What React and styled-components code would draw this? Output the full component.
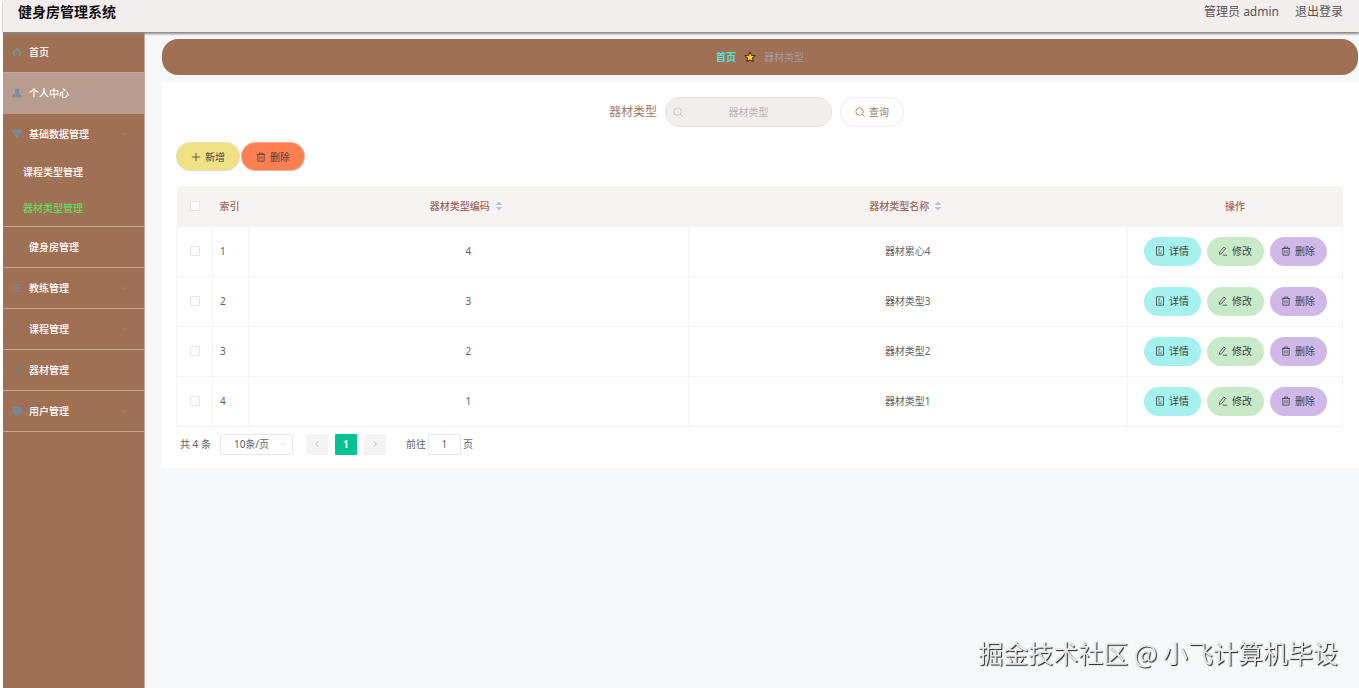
import React from 'react';
import styled, { createGlobalStyle } from 'styled-components';

const menus = [
  { name: '首页', icon: 'home' },
  { name: '个人中心', icon: 'user', active: true },
  {
    name: '基础数据管理',
    icon: 'funnel',
    arrow: true,
    children: [{ name: '课程类型管理' }, { name: '器材类型管理', current: true }],
  },
  { name: '健身房管理', icon: 'card' },
  { name: '教练管理', icon: 'list', arrow: true },
  { name: '课程管理', icon: 'copy', arrow: true },
  { name: '器材管理', icon: 'plane' },
  { name: '用户管理', icon: 'screen', arrow: true },
];

const rows = [
  { id: 1, code: '4', name: '器材累心4' },
  { id: 2, code: '3', name: '器材类型3' },
  { id: 3, code: '2', name: '器材类型2' },
  { id: 4, code: '1', name: '器材类型1' },
];

const menuIcons = {
  home: (
    <g fill="none" stroke="#6f9c98" strokeWidth="2">
      <path d="M.8 7.5 6 2l5.2 5.500" />
      <path d="M3 7v4.500M9 7v4.500" />
    </g>
  ),
  user: (
    <g fill="#7f8c9a">
      <path d="M3.500 1h5v5.500h-5z" />
      <path d="M3.500 6.500h5L11.500 9v2.500H.5V9z" />
    </g>
  ),
  funnel: (
    <g fill="#768e98">
      <path d="M.5 1h11v3.500L9.500 6h-7L.5 4.500z" />
      <path d="M2.800 7h6.400L6 11.800z" />
    </g>
  ),
  card: <path d="M1 3h3V2h7v7.500H9V11H1z" fill="none" stroke="#8d7765" />,
  list: <path d="M1 2.200h10M1 6h10M1 9.800h10" stroke="#80807c" strokeWidth="2.200" />,
  copy: (
    <path d="M4 9.500H2.500L1 11V5l2-3.500h6l2 2v4L9 10.500H6" fill="none" stroke="#857a66" strokeWidth="1.200" />
  ),
  plane: <path d="M.5 5 11.500 1 8 11.500 5.800 6.600z" fill="#7d7b6c" />,
  screen: (
    <g fill="#75879a">
      <path d="M.5 1h11v8H.5z" />
      <path d="M3 9h7v2.500H3z" />
    </g>
  ),
};

const lineIcons = {
  search: (
    <>
      <circle cx="5.500" cy="5.500" r="4.500" />
      <path d="m8.800 8.800 2.700 2.700" />
    </>
  ),
  plus: <path d="M6 1v10M1 6h10" />,
  trash: <path d="M1 3h10M4 3V1.300h4V3M2.200 3v8h7.600V3M4.700 5.200v3.600M7.300 5.200v3.600" />,
  doc: <path d="M1.800 1h8.400v10H1.800zM4 3.800h2M4 6h1.500M4 8.500h4M7 6h1" />,
  edit: <path d="M2 7.500 7 1.200l2.200 1.700L4.300 9.200 1.700 10zM5.500 11H11" />,
  down: <path d="m2 4.500 4 3.500 4-3.500" />,
  left: <path d="M7.500 2.500 4.500 6l3 3.500" />,
  right: <path d="M4.500 2.500 7.500 6l-3 3.500" />,
};

const Icon = ({ name, size = 10 }) => (
  <LineSvg viewBox="0 0 12 12" width={size} height={size} aria-hidden="true">
    {lineIcons[name]}
  </LineSvg>
);

const SortIcon = () => (
  <svg viewBox="0 0 8 10" width="8" height="10" aria-hidden="true">
    <path d="M4 .5 7.500 4h-7zM4 9.500.5 6h7z" fill="#c0c4cc" />
  </svg>
);

const App = () => {
  const [checked, setChecked] = React.useState([]);

  const toggle = (id) => {
    setChecked(checked.includes(id) ? checked.filter((c) => c !== id) : [...checked, id]);
  };

  const toggleAll = () => {
    setChecked(checked.length === rows.length ? [] : rows.map((row) => row.id));
  };

  return (
    <>
      <GlobalStyle />
      <Page>
        <Header>
          <Title>健身房管理系统</Title>
          <Account>
            <span>管理员 admin</span>
            <LogoutButton type="button">退出登录</LogoutButton>
          </Account>
        </Header>
        <Body>
          <Sidebar>
            {menus.map((menu) => (
              <MenuGroup key={menu.name} $plain={!!menu.active}>
                <MenuLink href="#" $active={menu.active}>
                  <MenuSvg viewBox="0 0 12 12" width="10" height="10" aria-hidden="true">
                    {menuIcons[menu.icon]}
                  </MenuSvg>
                  <span>{menu.name}</span>
                  {menu.arrow && (
                    <Arrow>
                      <Icon name="down" size={6} />
                    </Arrow>
                  )}
                </MenuLink>
                {menu.children &&
                  menu.children.map((sub) => (
                    <SubLink href="#" key={sub.name} $current={sub.current}>
                      {sub.name}
                    </SubLink>
                  ))}
              </MenuGroup>
            ))}
          </Sidebar>
          <Main>
            <Breadcrumb>
              <HomeLink href="#">首页</HomeLink>
              <svg viewBox="0 0 14 14" width="12" height="12" aria-hidden="true">
                <path
                  d="m7 1 1.800 3.900 4.200.5-3.100 2.900.8 4.200L7 10.400l-3.700 2.100.8-4.200L1 5.400l4.200-.5z"
                  fill="#fcc72b"
                  stroke="#4a3210"
                  strokeWidth="1.200"
                  strokeLinejoin="round"
                />
              </svg>
              <span>器材类型</span>
            </Breadcrumb>
            <Card>
              <SearchForm onSubmit={(e) => e.preventDefault()}>
                <label htmlFor="type">器材类型</label>
                <SearchBox>
                  <Icon name="search" />
                  <SearchInput id="type" placeholder="器材类型" />
                </SearchBox>
                <SearchButton type="submit">
                  <Icon name="search" />
                  查询
                </SearchButton>
              </SearchForm>
              <Toolbar>
                <ToolButton type="button" $color="#f0e284">
                  <Icon name="plus" />
                  新增
                </ToolButton>
                <ToolButton type="button" $color="#ff7f50">
                  <Icon name="trash" />
                  删除
                </ToolButton>
              </Toolbar>
              <Table>
                <colgroup>
                  <col width="36" />
                  <col width="36" />
                  <col />
                  <col />
                  <col width="215" />
                </colgroup>
                <thead>
                  <tr>
                    <Th>
                      <Checkbox
                        aria-label="全选"
                        checked={checked.length === rows.length}
                        onChange={toggleAll}
                      />
                    </Th>
                    <Th $left>索引</Th>
                    <Th>
                      <Sortable>
                        器材类型编码 <SortIcon />
                      </Sortable>
                    </Th>
                    <Th>
                      <Sortable>
                        器材类型名称 <SortIcon />
                      </Sortable>
                    </Th>
                    <Th>操作</Th>
                  </tr>
                </thead>
                <tbody>
                  {rows.map((row) => (
                    <tr key={row.id}>
                      <Td>
                        <Checkbox
                          aria-label={row.name}
                          checked={checked.includes(row.id)}
                          onChange={() => toggle(row.id)}
                        />
                      </Td>
                      <Td $left>{row.id}</Td>
                      <Td>{row.code}</Td>
                      <Td>{row.name}</Td>
                      <Td>
                        <Actions>
                          <ActionButton type="button" $color="#a6f0ee">
                            <Icon name="doc" />
                            详情
                          </ActionButton>
                          <ActionButton type="button" $color="#c8eac8">
                            <Icon name="edit" />
                            修改
                          </ActionButton>
                          <ActionButton type="button" $color="#d0b8e8">
                            <Icon name="trash" />
                            删除
                          </ActionButton>
                        </Actions>
                      </Td>
                    </tr>
                  ))}
                </tbody>
              </Table>
              <Pagination>
                <span>共 4 条</span>
                <SizeBox>
                  <SizeSelect aria-label="每页条数" defaultValue="10">
                    <option value="10">10条/页</option>
                    <option value="20">20条/页</option>
                  </SizeSelect>
                  <Icon name="down" size={8} />
                </SizeBox>
                <Pager>
                  <PageButton type="button" aria-label="上一页">
                    <Icon name="left" />
                  </PageButton>
                  <PageButton type="button" $current>
                    1
                  </PageButton>
                  <PageButton type="button" aria-label="下一页">
                    <Icon name="right" />
                  </PageButton>
                </Pager>
                <Jump>
                  前往
                  <JumpInput defaultValue="1" />页
                </Jump>
              </Pagination>
            </Card>
          </Main>
        </Body>
        <Watermark>掘金技术社区 @ 小飞计算机毕设</Watermark>
      </Page>
    </>
  );
};

const GlobalStyle = createGlobalStyle`
  * {
    box-sizing: border-box;
  }
  body {
    margin: 0;
    background: #fff;
    color: #606266;
    font-family: 'Noto Sans', 'Noto Sans CJK SC', sans-serif;
    font-size: 10px;
    line-height: 16px;
  }
  button, input, select {
    font: inherit;
    color: inherit;
  }
  button {
    cursor: pointer;
  }
  a {
    text-decoration: none;
  }
`;

const LineSvg = styled.svg`
  flex: none;
  fill: none;
  stroke: currentColor;
`;

const Page = styled.div`
  display: flex;
  flex-direction: column;
  min-height: 100vh;
  padding-left: 3px;
`;

const Header = styled.header`
  position: relative;
  z-index: 1;
  display: flex;
  align-items: center;
  justify-content: space-between;
  height: 32px;
  padding: 0 16px 9px 15px;
  background: #f3eeee;
  box-shadow: 0 2px 2px #8c8888;
`;

const Title = styled.h1`
  margin: 0;
  color: #111;
  font-size: 14px;
  font-weight: 700;
  line-height: 20px;
`;

const Account = styled.div`
  display: flex;
  gap: 16px;
  color: #555;
  font-size: 12px;
`;

const LogoutButton = styled.button`
  padding: 0;
  border: none;
  background: none;
`;

const Body = styled.div`
  display: flex;
  flex: 1;
`;

const Sidebar = styled.nav`
  flex: none;
  width: 142px;
  background: #a07055;
  border-right: 1px solid #c9a999;
`;

const MenuGroup = styled.div`
  border-bottom: 1px solid ${({ $plain }) => ($plain ? '#b89c90' : '#c8ab8f')};
`;

const MenuLink = styled.a`
  display: flex;
  align-items: center;
  gap: 7px;
  height: 40px;
  padding: 0 16px 0 9px;
  background: ${({ $active }) => ($active ? '#b89c90' : 'transparent')};
  color: #fff;
  font-weight: 500;
`;

const MenuSvg = styled.svg`
  flex: none;
`;

const Arrow = styled.span`
  display: flex;
  margin-left: auto;
  color: #b28a72;
`;

const SubLink = styled.a`
  display: flex;
  align-items: center;
  height: 36px;
  padding-left: 20px;
  color: ${({ $current }) => ($current ? '#5fdc5a' : '#fff')};
  font-weight: 500;
`;

const Main = styled.main`
  flex: 1;
  min-width: 0;
  padding: 7px 0 0 17px;
  background: #f6f8fa;
`;

const Breadcrumb = styled.div`
  display: flex;
  align-items: center;
  justify-content: center;
  gap: 8px;
  height: 36px;
  margin-right: 1px;
  border-radius: 16px;
  background: #a07055;
  color: #a39a9c;
`;

const HomeLink = styled.a`
  color: #5ce0dc;
  font-weight: 700;
`;

const Card = styled.section`
  margin-top: 7px;
  padding: 15px 16px 13px 14px;
  background: #fff;
`;

const SearchForm = styled.form`
  display: flex;
  align-items: center;
  justify-content: center;
  gap: 8px;
  padding-right: 6px;
  color: #a07868;

  label {
    font-size: 12px;
  }
`;

const SearchBox = styled.div`
  display: flex;
  align-items: center;
  width: 167px;
  height: 30px;
  padding: 0 7px;
  border: 1px solid #e6dddd;
  border-radius: 15px;
  background: #f3eeee;
  color: #c0b8bc;
`;

const SearchInput = styled.input`
  flex: 1;
  min-width: 0;
  padding: 0 10px 0 0;
  border: none;
  outline: none;
  background: none;
  text-align: center;

  &::placeholder {
    color: #bcb4b8;
  }
`;

const RoundButton = styled.button`
  display: flex;
  align-items: center;
  justify-content: center;
  gap: 4px;
  padding: 0;
  border: none;
  border-radius: 15px;
`;

const SearchButton = styled(RoundButton)`
  width: 64px;
  height: 30px;
  border: 1px solid #ececee;
  background: #fff;
`;

const Toolbar = styled.div`
  display: flex;
  gap: 1px;
  margin: 15px 0;
`;

const ToolButton = styled(RoundButton)`
  width: 64px;
  height: 29px;
  border: 1px solid rgba(220, 223, 230, 0.5);
  background: ${({ $color }) => $color};
  color: #444;
`;

const Table = styled.table`
  width: 100%;
  table-layout: fixed;
  border-collapse: collapse;
  text-align: center;
`;

const Th = styled.th`
  height: 40px;
  padding: ${({ $left }) => ($left ? '0 7px' : '0')};
  background: #f6f3f3;
  color: #a0685c;
  font-weight: 500;
  text-align: ${({ $left }) => ($left ? 'left' : 'center')};
`;

const Td = styled.td`
  height: 50px;
  padding: ${({ $left }) => ($left ? '0 7px' : '0')};
  border: 1px solid #f2f3f5;
  text-align: ${({ $left }) => ($left ? 'left' : 'center')};
`;

const Sortable = styled.span`
  display: inline-flex;
  align-items: center;
  gap: 5px;
  padding-right: 4px;
`;

const Checkbox = styled.input.attrs({ type: 'checkbox' })`
  display: block;
  width: 10px;
  height: 10px;
  margin: 0 auto;
  border: 1px solid #e2e4e8;
  border-radius: 1px;
  background: #fff;
  appearance: none;

  &:checked {
    background: #00c292;
  }
`;

const Actions = styled.div`
  display: flex;
  justify-content: center;
  gap: 6px;
`;

const ActionButton = styled(RoundButton)`
  width: 57px;
  height: 29px;
  background: ${({ $color }) => $color};
  color: #444;
`;

const Pagination = styled.div`
  display: flex;
  align-items: center;
  margin-top: 7px;
  padding-left: 4px;
`;

const SizeBox = styled.div`
  display: flex;
  align-items: center;
  width: 73px;
  height: 21px;
  margin: 0 13px 0 9px;
  padding-right: 5px;
  border: 1px solid #e4e6ea;
  border-radius: 3px;
  color: #c0c4cc;
`;

const SizeSelect = styled.select`
  flex: 1;
  min-width: 0;
  padding: 0 0 0 13px;
  border: none;
  outline: none;
  background: none;
  color: #606266;
  appearance: none;
`;

const Pager = styled.div`
  display: flex;
  gap: 7px;
`;

const PageButton = styled.button`
  display: flex;
  align-items: center;
  justify-content: center;
  width: 22px;
  height: 21px;
  padding: 0;
  border: none;
  border-radius: 1px;
  background: ${({ $current }) => ($current ? '#00c292' : '#f4f4f5')};
  color: ${({ $current }) => ($current ? '#fff' : '#b4b7bd')};
  font-weight: 700;
`;

const Jump = styled.label`
  display: flex;
  align-items: center;
  gap: 2px;
  margin-left: 20px;
`;

const JumpInput = styled.input`
  width: 33px;
  height: 21px;
  padding: 0;
  border: 1px solid #e4e6ea;
  border-radius: 2px;
  text-align: center;
`;

const Watermark = styled.div`
  position: fixed;
  right: 21px;
  bottom: 18px;
  z-index: 2;
  color: #e8e8e8;
  font-family: 'Noto Sans CJK SC', sans-serif;
  font-size: 25px;
  line-height: 36px;
  text-shadow: 1px 1px 1px #222;
  pointer-events: none;
`;

export default App;
